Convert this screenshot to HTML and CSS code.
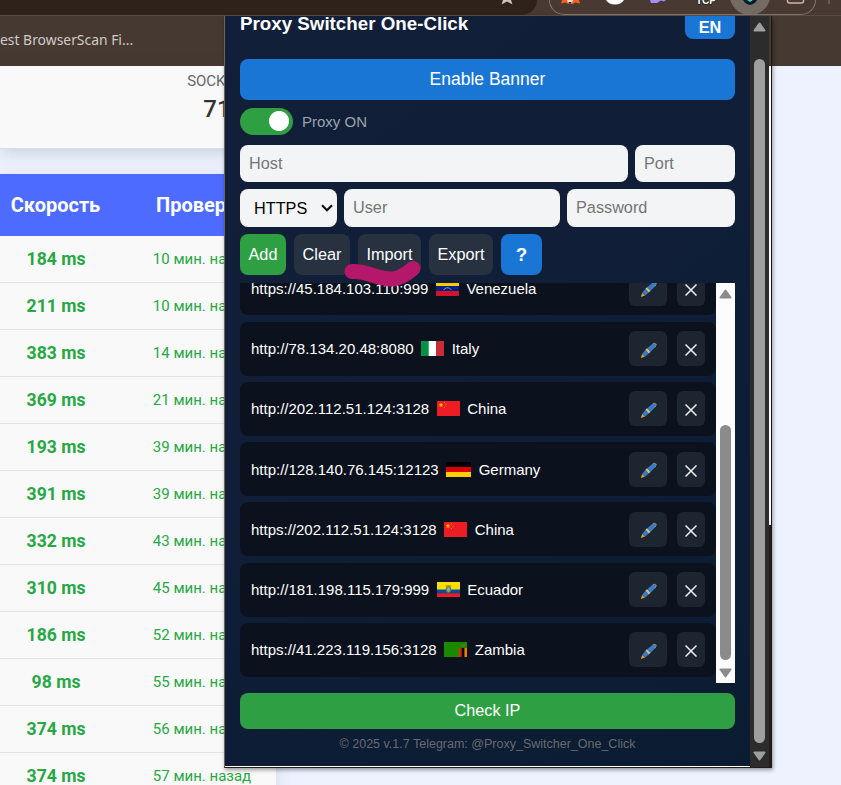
FILE: index.html
```
<!DOCTYPE html>
<html lang="en">
<head>
  <meta charset="utf-8">
  <title>Proxy Switcher One-Click</title>
  <meta name="viewport" content="width=device-width, initial-scale=1">
  <link rel="stylesheet" href="styles.css">
</head>

<body>
  <!-- browser chrome -->
  <div class="toolbar">
    <div class="omnibox">
      <svg width="18" height="5" viewBox="0 0 18 5"><path d="M3 0L1.500 4.500L7 1.500L12.500 4.500L11 0" fill="#c9c4c1"/></svg>
    </div>
    <div class="extensions">
      <svg class="ext-icons" width="265" height="15" viewBox="0 0 265 15">
        <path d="M12 0h17l1 3.500-5-1-2 1.500h-5l-2-1.500-5 1z" fill="#f4601e"/><path d="M17 0h6l-1 3h-4z" fill="#e9dccf"/><path d="M18.500 2h3l-.5 1.500h-2z" fill="#222"/>
        <path d="M56 0h18q-3 4.500-9 4.500T56 0z" fill="#fff"/>
        <path d="M100 0h16l-2 1.500-3-1-4 2.500h-6z" fill="#a290f4"/>
        <text x="146" y="4" class="ext-label">TCP</text>
        <circle cx="200" cy="-5.500" r="20.500" fill="#746b64"/>
        <path d="M193 0h14q-2 4-7 5-5-1-7-5z" fill="#071c22"/><path d="M197 0h6l-3 2z" fill="#22d8d8"/>
        <path d="M237.500-3v4q0 2 2 2h12q2 0 2-2v-4" fill="none" stroke="#cbb4ab" stroke-width="1.500"/>
      </svg>
    </div>
    <span class="divider"></span>
  </div>
  <div class="bookmarks">est BrowserScan Fi...</div>

  <!-- page behind the popup -->
  <div class="page">
    <div class="stats">
      <div class="stat">
        <div class="stat-label">SOCKS5</div>
        <div class="stat-value">71</div>
      </div>
    </div>
    <table class="proxies">
      <thead><tr><th>Скорость</th><th>Проверка</th></tr></thead>
      <tbody>
        <tr><td>184 ms</td><td>10 мин. назад</td></tr>
        <tr><td>211 ms</td><td>10 мин. назад</td></tr>
        <tr><td>383 ms</td><td>14 мин. назад</td></tr>
        <tr><td>369 ms</td><td>21 мин. назад</td></tr>
        <tr><td>193 ms</td><td>39 мин. назад</td></tr>
        <tr><td>391 ms</td><td>39 мин. назад</td></tr>
        <tr><td>332 ms</td><td>43 мин. назад</td></tr>
        <tr><td>310 ms</td><td>45 мин. назад</td></tr>
        <tr><td>186 ms</td><td>52 мин. назад</td></tr>
        <tr><td>98 ms</td><td>55 мин. назад</td></tr>
        <tr><td>374 ms</td><td>56 мин. назад</td></tr>
        <tr><td>374 ms</td><td>57 мин. назад</td></tr>
      </tbody>
    </table>
  </div>

  <!-- shared icons -->
  <svg class="defs" width="0" height="0">
    <symbol id="pen" viewBox="0 0 18 18">
      <path d="M.8 17L2.400 12.600L5.400 15.400z" fill="#d9a441"/>
      <path d="M2.400 12.400L6.300 7.800 12.800 2.300Q15.500.400 16.900 1.800 18 3.500 16 5.600L10 11.700 5.400 15.400z" fill="#3a7ac6"/>
      <path d="M6 8l1.300-1.200 3.500 3.900-1.400 1.200z" fill="#f7c348"/>
      <path d="M13.500 2q2.400-1.400 3.300-.1.800 1.500-1 3.400" fill="none" stroke="#d9a441" stroke-dasharray="2 1"/>
    </symbol>
    <symbol id="cross" viewBox="0 0 12 12"><path d="M.5.500l11 11M11.500.500l-11 11" stroke="#f0f2f4" stroke-width="1.500"/></symbol>
    <symbol id="arrow" viewBox="0 0 13 10"><path d="M6.500 1.500L11.500 8.500H1.500z" fill="currentColor" stroke="currentColor" stroke-width="2" stroke-linejoin="round"/></symbol>
    <symbol id="cn" viewBox="0 0 23 15">
      <path d="M0 0h23v15H0z" fill="#ee1c25"/>
      <path d="M4 1.500l.7 1.500 1.600.2-1.200 1.100.3 1.700L4 5.200 2.600 6l.3-1.700-1.200-1.100L3.300 3z" fill="#fb0"/>
      <path d="M7 1.500h1M8.500 3h1M8.500 5h1M7 6.500h1" stroke="#f59a13" stroke-width=".7"/>
    </symbol>
  </svg>

  <!-- extension popup -->
  <div class="popup">
    <div class="panel">
      <div class="head"><h1>Proxy Switcher One-Click</h1><button class="lang">EN</button></div>
      <button class="banner">Enable Banner</button>
      <div class="power"><span class="switch"></span><span>Proxy ON</span></div>
      <div class="fields">
        <input class="host" placeholder="Host"><input class="port" placeholder="Port">
      </div>
      <div class="fields">
        <div class="scheme"><span>HTTPS</span><svg width="12" height="8" viewBox="0 0 12 8"><path d="M1 1.300l5 5 5-5" fill="none" stroke="#111" stroke-width="2.200"/></svg></div>
        <input class="user" placeholder="User"><input class="pass" placeholder="Password">
      </div>
      <div class="actions">
        <button class="add">Add</button>
        <button class="clear">Clear</button>
        <button class="import">Import</button>
        <button class="export">Export</button>
        <button class="help">?</button>
        <svg class="marker" width="80" height="30" viewBox="0 0 80 30"><path d="M8 11.500Q17 11 28 15T49 19Q58 18 69 8.500" fill="none" stroke="#b5176a" stroke-width="15" stroke-linecap="round" stroke-linejoin="round"/></svg>
      </div>

      <div class="list">
        <div class="rows">
          <div class="row">
            <span class="addr">https://45.184.103.110:999</span>
            <svg class="flag" viewBox="0 0 23 15"><path d="M0 0h23v5H0z" fill="#fc0"/><path d="M0 5h23v5H0z" fill="#00247d"/><path d="M0 10h23v5H0z" fill="#cf142b"/><path d="M7.500 9q4-4.500 8 0" fill="none" stroke="#b9c3e6" stroke-dasharray="1.500 .7"/></svg>
            <span>Venezuela</span>
            <button class="edit"><svg><use href="#pen"/></svg></button><button class="del"><svg><use href="#cross"/></svg></button>
          </div>
          <div class="row">
            <span class="addr">http://78.134.20.48:8080</span>
            <svg class="flag" viewBox="0 0 23 15"><path d="M0 0h8v15H0z" fill="#009246"/><path d="M7.700 0h7.600v15H7.700z" fill="#fff"/><path d="M15.300 0H23v15h-7.700z" fill="#ce2b37"/></svg>
            <span>Italy</span>
            <button class="edit"><svg><use href="#pen"/></svg></button><button class="del"><svg><use href="#cross"/></svg></button>
          </div>
          <div class="row">
            <span class="addr">http://202.112.51.124:3128</span>
            <svg class="flag"><use href="#cn"/></svg>
            <span>China</span>
            <button class="edit"><svg><use href="#pen"/></svg></button><button class="del"><svg><use href="#cross"/></svg></button>
          </div>
          <div class="row">
            <span class="addr">http://128.140.76.145:12123</span>
            <svg class="flag wide" viewBox="0 0 25 15"><path d="M0 0h25v5H0z" fill="#000"/><path d="M0 5h25v5H0z" fill="#d00"/><path d="M0 10h25v5H0z" fill="#ffce00"/></svg>
            <span>Germany</span>
            <button class="edit"><svg><use href="#pen"/></svg></button><button class="del"><svg><use href="#cross"/></svg></button>
          </div>
          <div class="row">
            <span class="addr">https://202.112.51.124:3128</span>
            <svg class="flag"><use href="#cn"/></svg>
            <span>China</span>
            <button class="edit"><svg><use href="#pen"/></svg></button><button class="del"><svg><use href="#cross"/></svg></button>
          </div>
          <div class="row">
            <span class="addr">http://181.198.115.179:999</span>
            <svg class="flag" viewBox="0 0 23 15"><path d="M0 0h23v8H0z" fill="#fd0"/><path d="M0 7.500h23v4H0z" fill="#034ea2"/><path d="M0 11.300h23V15H0z" fill="#ed1c24"/><path d="M8.500 4h6" stroke="#8a7340"/><ellipse cx="11.500" cy="7.500" rx="2.200" ry="3" fill="#7fae9d" stroke="#6b6a38"/></svg>
            <span>Ecuador</span>
            <button class="edit"><svg><use href="#pen"/></svg></button><button class="del"><svg><use href="#cross"/></svg></button>
          </div>
          <div class="row">
            <span class="addr">https://41.223.119.156:3128</span>
            <svg class="flag" viewBox="0 0 23 15"><path d="M0 0h23v15H0z" fill="#198a00"/><path d="M15 6h3v9h-3z" fill="#de2010"/><path d="M17.700 6h3v9h-3z" fill="#000"/><path d="M20.500 6H23v9h-2.500z" fill="#ef7d00"/><path d="M16 2l3 1.500L22 2l-2 2.500h-2z" fill="#8f6a10"/></svg>
            <span>Zambia</span>
            <button class="edit"><svg><use href="#pen"/></svg></button><button class="del"><svg><use href="#cross"/></svg></button>
          </div>
        </div>
        <div class="scroll list-scroll">
          <svg class="up"><use href="#arrow"/></svg><span class="thumb"></span><svg class="down"><use href="#arrow"/></svg>
        </div>
      </div>

      <button class="check">Check IP</button>
      <div class="foot">© 2025 v.1.7 Telegram: @Proxy_Switcher_One_Click</div>
    </div>
    <div class="scroll popup-scroll">
      <svg class="up"><use href="#arrow"/></svg><span class="thumb"></span><svg class="down"><use href="#arrow"/></svg>
    </div>
    <div class="edge"></div>
  </div>
</body>
</html>
```

FILE: styles.css
```
* {
  box-sizing: border-box;
}
body {
  margin: 0;
  height: 785px;
  overflow: hidden;
  position: relative;
  background: #eef2ff;
  font-family: "Liberation Sans", Arial, sans-serif;
}
svg {
  display: block;
}
button {
  font-family: inherit;
  font-size: 16.25px;
  color: #fff;
  border: none;
  border-radius: 8px;
  padding: 0;
}
.defs {
  position: absolute;
}

/* browser chrome */
.toolbar {
  height: 15px;
  display: flex;
  background: #483a32;
}
.omnibox {
  width: 537px;
  padding-left: 500px;
  background: #2f221b;
  border-radius: 0 0 24px 0;
}
.extensions {
  width: 267px;
  height: 15px;
  margin-left: 12px;
  border: 1px solid #81766f;
  border-top: none;
  border-radius: 0 0 18px 18px;
  overflow: hidden;
}
.ext-label {
  font-size: 10px;
  font-weight: bold;
  fill: #fff;
  stroke: #222;
  stroke-width: 1.5px;
  paint-order: stroke;
}
.divider {
  width: 2px;
  height: 4px;
  margin-left: 12px;
  background: #6a5c55;
}
.bookmarks {
  height: 51px;
  padding-top: 14px;
  background: #463932;
  border-top: 1px solid #584d47;
  font: 13.9px/20px "Noto Sans", sans-serif;
  color: #d0cbc7;
}

/* proxy table page */
.page {
  font-family: Roboto, sans-serif;
}
.stats {
  width: 276px;
  height: 83px;
  padding: 6px 0 0 185px;
  background: #f9f9f9;
  border-bottom: 1px solid #dcdde2;
  box-shadow: 0 4px 16px rgba(60,70,110,.2);
}
.stat {
  width: 60px;
  text-align: center;
}
.stat-label {
  font-size: 15px;
  line-height: 18px;
  color: #666;
}
.stat-value {
  margin-right: -4px;
  font-size: 24px;
  font-weight: 500;
  line-height: 38px;
  color: #333;
}
.proxies {
  width: 276px;
  margin-top: 25px;
  table-layout: fixed;
  border-collapse: separate;
  border-spacing: 0;
  background: #f9f9f9;
  text-align: center;
  box-shadow: 0 4px 16px rgba(60,70,110,.15);
}
.proxies th {
  height: 62px;
  padding: 0;
  background: #4e6bff;
  color: #fff;
  font-size: 20px;
  font-weight: bold;
}
.proxies th:first-child {
  width: 128px;
  padding-right: 17px;
}
.proxies td {
  height: 47px;
  padding: 0;
  border-bottom: 1px solid #e3e3e5;
  color: #28a745;
  font-size: 15px;
}
.proxies td:first-child {
  padding-right: 16px;
  font-size: 17.6px;
  font-weight: bold;
}

/* popup */
.popup {
  position: absolute;
  left: 224px;
  top: 16px;
  width: 548px;
  height: 752px;
  display: flex;
  background: #0f1d36;
  border-left: 1px solid #6b665c;
  border-bottom: 1px solid #231c17;
  box-shadow: 1px 2px 4px rgba(0,0,0,.4);
}
.panel {
  width: 525px;
  height: 751px;
  padding: 0 15px;
  overflow: hidden;
  background: linear-gradient(145deg, #121f38, #101e38 45%, #0a1c32);
  border-bottom: 1px solid #fff;
}
.head {
  height: 23px;
  display: flex;
  justify-content: space-between;
  align-items: flex-start;
}
h1 {
  margin: -3px 0 0;
  font-size: 18.75px;
  line-height: 22px;
  color: #fff;
}
.lang {
  width: 50px;
  height: 23px;
  background: #1976d4;
  border-radius: 0 0 8px 8px;
  font-weight: bold;
}
.banner {
  display: block;
  width: 100%;
  height: 41px;
  margin-top: 20px;
  background: #1976d4;
  font-size: 17.5px;
}
.power {
  display: flex;
  align-items: center;
  gap: 9px;
  margin: 8px 0 10px;
  height: 27px;
  font-size: 15px;
  color: #9aa3ae;
}
.switch {
  width: 53px;
  height: 27px;
  border-radius: 14px;
  background: radial-gradient(circle at 39px 13px, #fff 9.7px, #2f9f43 10.3px);
}
.fields {
  display: flex;
  gap: 7px;
  height: 37px;
  margin-bottom: 7px;
}
.fields + .fields {
  height: 38px;
}
input {
  min-width: 0;
  border: none;
  border-radius: 8px;
  padding: 0 9px;
  background: #f3f4f6;
  font: 16.25px "Liberation Sans", Arial, sans-serif;
}
input::placeholder {
  color: #757575;
}
.host { width: 388px; }
.port { width: 100px; }
.user { width: 216px; }
.pass { width: 168px; }
.user, .pass {
  padding-bottom: 2px;
}
.scheme {
  width: 97px;
  display: flex;
  align-items: center;
  justify-content: space-between;
  padding: 0 4px 0 14px;
  border-radius: 8px;
  background: #f3f4f6;
  color: #000;
  font-size: 16.25px;
}
.actions {
  position: relative;
  display: flex;
  gap: 8px;
  height: 41px;
}
.actions button {
  background: #27313f;
}
.actions .add {
  width: 46px;
  background: #2f9f43;
}
.clear { width: 56px; }
.import { width: 63px; }
.export { width: 64px; }
.actions .help {
  width: 41px;
  background: #1976d4;
  font-size: 18.75px;
  font-weight: bold;
}
.marker {
  position: absolute;
  left: 104px;
  top: 26px;
  z-index: 1;
}

/* saved proxies */
.list {
  display: flex;
  height: 400px;
  margin-top: 8px;
  overflow: hidden;
}
.rows {
  width: 476px;
  margin-top: -21.6px;
}
.row {
  display: flex;
  align-items: center;
  height: 54px;
  margin-bottom: 6.25px;
  padding: 0 11px;
  border-radius: 8px;
  background: #0b121e;
  color: #fff;
  font-size: 15px;
}
.flag {
  width: 23px;
  height: 15px;
  margin: 0 7.500px 0 7.500px;
}
.flag.wide {
  width: 25px;
}
.row button {
  height: 35px;
  display: grid;
  place-items: center;
  background: #1d2630;
  border-radius: 6px;
}
.row .edit {
  width: 38px;
  margin-left: auto;
}
.row .del {
  width: 28px;
  margin-left: 10px;
}
.edit svg {
  width: 17px;
  height: 17px;
  margin: 3px 0 0 1px;
}
.del svg {
  width: 12px;
  height: 12px;
  margin-top: 3px;
}

/* scrollbars */
.scroll {
  width: 19px;
  display: flex;
  flex-direction: column;
  align-items: center;
}
.scroll svg {
  width: 13px;
  height: 10px;
}
.down {
  transform: rotate(180deg);
}
.thumb {
  width: 11px;
  border-radius: 6px;
  background: currentColor;
}
.list-scroll {
  background: #fcfcfc;
  color: #8b8b8b;
  padding-top: 6px;
}
.list-scroll .thumb {
  height: 235px;
  margin: 126px 0 8px;
}
.popup-scroll {
  background: #2c2c2c;
  color: #9f9f9f;
  padding-top: 6px;
}
.popup-scroll .thumb {
  height: 684px;
  margin: 27px 0 8px;
}
.edge {
  width: 3px;
  background: linear-gradient(#463932 50px, #fff 50px, #fff 509px, #231c17 509px);
  border-right: 1px solid #1c1815;
}

.check {
  display: block;
  width: 100%;
  height: 36px;
  margin-top: 10px;
  padding-bottom: 2px;
  background: #2f9f43;
}
.foot {
  margin-top: 8px;
  text-align: center;
  font-size: 12.5px;
  color: #676b70;
}
```
